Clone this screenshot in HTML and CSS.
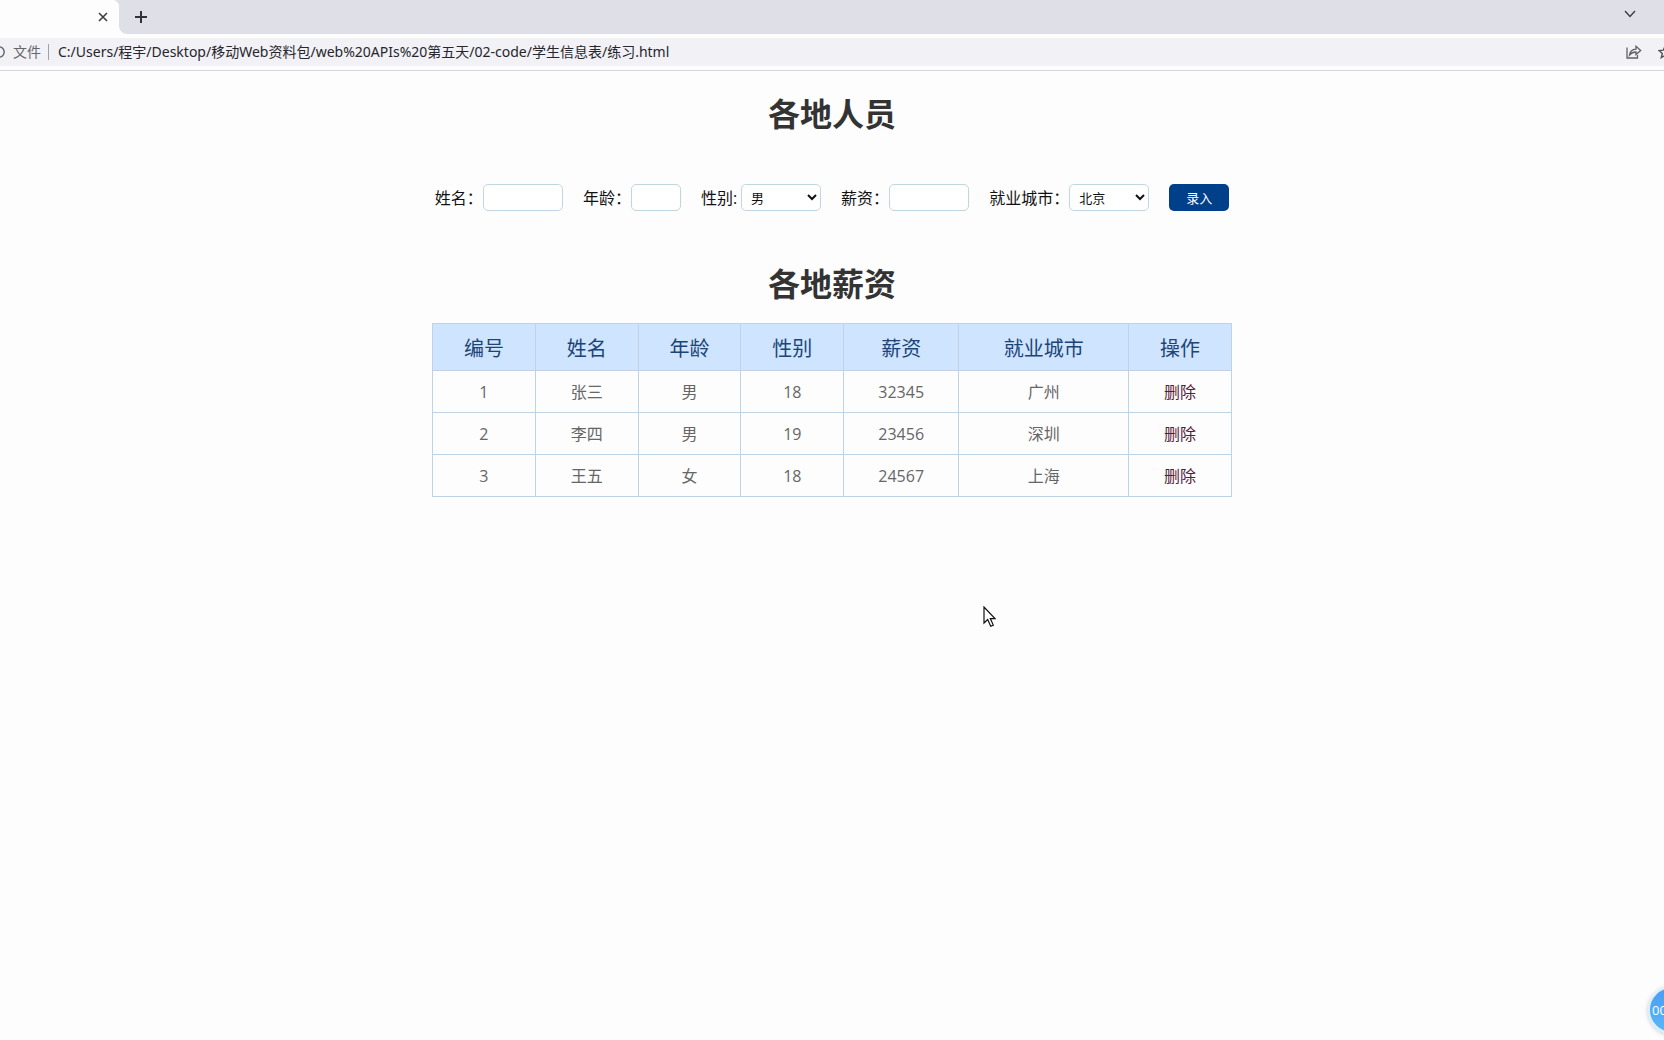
FILE: index.html
```html
<!DOCTYPE html>
<html lang="zh-CN">
<head>
<meta charset="UTF-8">
<title>学生信息表</title>
<link rel="stylesheet" href="styles.css">
</head>
<body>
<header class="browser">
  <div class="tabs">
    <div class="tab">
      <button class="icon-btn" type="button" aria-label="关闭标签页">
        <svg width="10" height="10" viewBox="0 0 10 10"><path d="M1 1l8 8M9 1l-8 8" stroke="#3c3c46" stroke-width="1.6"/></svg>
      </button>
    </div>
    <div class="strip">
      <button class="icon-btn" type="button" aria-label="新建标签页">
        <svg width="12" height="12" viewBox="0 0 12 12"><path d="M6 0v12M0 6h12" stroke="#32323c" stroke-width="2"/></svg>
      </button>
      <button class="icon-btn tab-search" type="button" aria-label="搜索标签页">
        <svg width="12" height="8" viewBox="0 0 12 8"><path d="M1 1l5 5.5L11 1" fill="none" stroke="#3c3c46" stroke-width="1.4"/></svg>
      </button>
    </div>
  </div>
  <div class="address">
    <svg class="info" width="12" height="12" viewBox="0 0 12 12"><circle cx="6" cy="6" r="5.2" fill="none" stroke="#5f6068" stroke-width="1.4"/></svg>
    <label class="scheme" for="url">文件</label>
    <input class="url" id="url" type="text" value="C:/Users/程宇/Desktop/移动Web资料包/web%20APIs%20第五天/02-code/学生信息表/练习.html">
    <button class="icon-btn" type="button" aria-label="分享">
      <svg width="16" height="14" viewBox="0 0 16 14"><path d="M1 2.500V13h10.500V10M3.500 10C4 6.200 6.500 4.300 10 4.200V1.300L14.700 5.500 10 9.600V7C7 7 5 8 3.500 10z" fill="none" stroke="#606068" stroke-width="1.300"/></svg>
    </button>
    <button class="icon-btn star" type="button" aria-label="收藏">
      <svg width="14" height="14" viewBox="0 0 14 14"><path d="M7 1.300l1.700 3.900 4.200.4-3.200 2.800 1 4.200L7 10.400l-3.700 2.200 1-4.200L1.100 5.600l4.200-.4z" fill="none" stroke="#505058" stroke-width="1.400"/></svg>
    </button>
  </div>
</header>

<main class="page">
  <h1 class="title">各地人员</h1>
  <form class="entry">
    <div class="field"><label for="uname">姓名：</label><input class="box" id="uname" type="text"></div>
    <div class="field"><label for="age">年龄：</label><input class="box box-age" id="age" type="text"></div>
    <div class="field"><label class="label-gender" for="gender">性别:</label><select class="box" id="gender"><option>男</option><option>女</option></select></div>
    <div class="field"><label for="salary">薪资：</label><input class="box" id="salary" type="text"></div>
    <div class="field"><label for="city">就业城市：</label><select class="box" id="city"><option>北京</option><option>上海</option><option>广州</option><option>深圳</option></select></div>
    <button class="add" type="button">录入</button>
  </form>

  <h1 class="title">各地薪资</h1>
  <table class="list">
    <colgroup><col><col><col><col><col class="col-salary"><col class="col-city"><col></colgroup>
    <thead>
      <tr><th>编号</th><th>姓名</th><th>年龄</th><th>性别</th><th>薪资</th><th>就业城市</th><th>操作</th></tr>
    </thead>
    <tbody>
      <tr><td>1</td><td>张三</td><td>男</td><td>18</td><td>32345</td><td>广州</td><td><a href="#">删除</a></td></tr>
      <tr><td>2</td><td>李四</td><td>男</td><td>19</td><td>23456</td><td>深圳</td><td><a href="#">删除</a></td></tr>
      <tr><td>3</td><td>王五</td><td>女</td><td>18</td><td>24567</td><td>上海</td><td><a href="#">删除</a></td></tr>
    </tbody>
  </table>
</main>

<svg class="pointer" width="13" height="22" viewBox="0 0 13 22"><path d="M1 1v16l3.700-3.500 3 6.800 2.600-1.200-3-6.500H12z" fill="#fff" stroke="#111" stroke-width="1.200"/></svg>
<div class="timer-area"><div class="timer">00</div></div>
</body>
</html>
```

FILE: styles.css
```css
* {
  margin: 0;
  padding: 0;
  box-sizing: border-box;
}

body {
  position: relative;
  min-height: 100vh;
  overflow-x: hidden;
  background: #fefdfe;
  color: #111;
  font: 16px/24px "Open Sans", "Noto Sans CJK SC", sans-serif;
}

input,
select,
button {
  font-family: inherit;
}

/* Browser bars */
.browser {
  border-bottom: 1px solid #d6d5da;
}

.tabs {
  display: flex;
  height: 34px;
  background: linear-gradient(to right, #fefdfe 50%, #dfdfe8 50%);
}

.tab {
  display: flex;
  align-items: center;
  justify-content: flex-end;
  width: 119px;
  padding-right: 11px;
  background: radial-gradient(circle at 0 100%, #fefdfe 8px, #dfdfe8 9px) top right / 8px 8px no-repeat, #fefdfe;
}

.strip {
  display: flex;
  flex: 1;
  align-items: center;
  justify-content: space-between;
  padding: 0 28px 0 16px;
  background: #dfdfe8;
  border-bottom-left-radius: 8px;
}

.icon-btn {
  display: flex;
  border: 0;
  background: none;
}

.tab-search {
  margin-bottom: 6px;
}

.address {
  display: flex;
  align-items: center;
  height: 28px;
  margin: 4px 0;
  overflow: hidden;
  background: #f1f1f6;
  font-size: 14px;
}

.info {
  flex: none;
  margin-left: -7px;
}

.scheme {
  margin-left: 8px;
  padding-right: 7px;
  border-right: 1px solid #a0a0a8;
  color: #66666c;
  line-height: 16px;
}

.url {
  flex: 1;
  padding: 0 0 2px 9px;
  border: 0;
  background: none;
  color: #26262c;
  font-family: "Noto Sans", "Noto Sans CJK SC", sans-serif;
  font-size: 14px;
}

.star {
  margin: 0 -8px 0 16px;
}

/* Page */
.page {
  width: 800px;
  max-width: 100%;
  margin: 0 auto;
}

.title {
  padding: 19px 0 15px;
  color: #333;
  font-size: 32px;
  line-height: 48px;
  text-align: center;
}

.entry {
  display: flex;
  align-items: center;
  justify-content: center;
  gap: 20px;
  padding: 31px 0 30px;
}

.field {
  display: flex;
  align-items: center;
}

.label-gender {
  padding-right: 4px;
}

.box {
  width: 80px;
  height: 27px;
  padding: 0 5px;
  border: 1px solid #c2d6e2;
  border-radius: 5px;
  background: #fff;
  color: #111;
  font-size: 13px;
}

.box-age {
  width: 50px;
}

.add {
  width: 60px;
  height: 27px;
  border: 0;
  border-radius: 5px;
  background: #00408b;
  color: #fff;
  font-size: 13px;
}

.list {
  width: 100%;
  border-collapse: collapse;
  table-layout: fixed;
  color: #666;
  text-align: center;
}

.col-salary {
  width: 115px;
}

.col-city {
  width: 170px;
}

.list th,
.list td {
  height: 42px;
  border: 1px solid #bfd3e6;
}

.list th {
  height: 47px;
  padding-top: 4px;
  background: #cfe4ff;
  color: #1c4477;
  font-size: 20px;
  font-weight: 400;
}

.list a {
  color: #5c1a36;
  text-decoration: none;
}

/* Overlays */
.pointer {
  position: absolute;
  top: 606px;
  left: 983px;
}

.timer-area {
  position: absolute;
  right: 0;
  bottom: 0;
  width: 24px;
  height: 60px;
  padding: 6px 0 0 8px;
  overflow: hidden;
}

.timer {
  width: 48px;
  height: 48px;
  padding-left: 2px;
  border: 2px solid #d8f0ff;
  border-radius: 50%;
  background: linear-gradient(#4a9cf4, #58b8fa);
  box-shadow: 0 1px 5px #c8c8d0;
  color: #fff;
  font-size: 13px;
  line-height: 44px;
}
```
